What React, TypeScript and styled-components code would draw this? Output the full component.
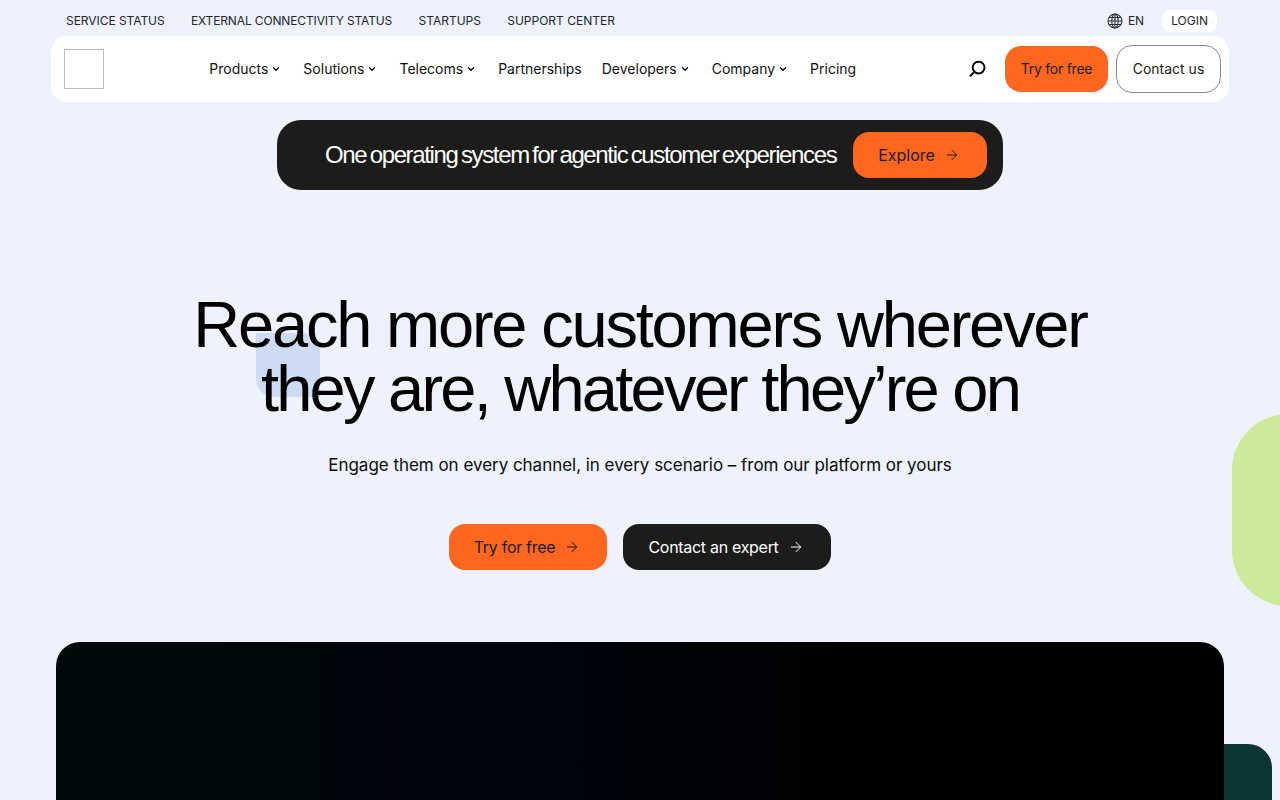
import React from 'react';
import styled, { createGlobalStyle } from 'styled-components';
import { ChevronDown, ArrowRight } from 'lucide-react';

const GlobalStyle = createGlobalStyle`
  html, body {
    margin: 0;
    height: 100%;
    background: #eef2fd;
    overflow: hidden;
  }
  * {
    box-sizing: border-box;
  }
  body {
    font-family: Inter, "Liberation Sans", sans-serif;
    color: #000;
  }
`;

const topLinks = [
  { label: 'Service status', spacing: -0.05 },
  { label: 'External connectivity status', spacing: -0.14 },
  { label: 'Startups', spacing: 0 },
  { label: 'Support center', spacing: 0 },
];

const navItems = [
  { label: 'Products', menu: true },
  { label: 'Solutions', menu: true },
  { label: 'Telecoms', menu: true },
  { label: 'Partnerships', menu: false },
  { label: 'Developers', menu: true },
  { label: 'Company', menu: true },
  { label: 'Pricing', menu: false },
];

const GlobeIcon = () => (
  <svg width="16" height="16" viewBox="0 0 16 16" fill="none" stroke="#2b3038" strokeWidth="1.1">
    <circle cx="8" cy="8" r="7" />
    <ellipse cx="8" cy="8" rx="3.2" ry="7" />
    <path d="M8 1v14M1 8h14M2 4.5h12M2 11.5h12" />
  </svg>
);

const SearchIcon = () => (
  <svg width="18" height="18" viewBox="0 0 18 18" fill="none" stroke="#000">
    <circle cx="10.6" cy="7.6" r="5.9" strokeWidth="1.9" />
    <path d="M5.8 12.4 2 16.4" strokeWidth="2" />
  </svg>
);

function App() {
  return (
    <Page>
      <GlobalStyle />
      <TopBar>
        <TopLinks>
          {topLinks.map((link) => (
            <TopLink key={link.label} $spacing={link.spacing}>
              {link.label}
            </TopLink>
          ))}
        </TopLinks>
        <TopActions>
          <Language>
            <GlobeIcon />
            EN
          </Language>
          <Login>Login</Login>
        </TopActions>
      </TopBar>

      <Nav>
        <LogoBox />
        <NavList>
          {navItems.map((item) => (
            <NavItem key={item.label}>
              {item.label}
              {item.menu && <ChevronDown size={10} strokeWidth={3} />}
            </NavItem>
          ))}
        </NavList>
        <NavActions>
          <SearchButton>
            <SearchIcon />
          </SearchButton>
          <NavButton>Try for free</NavButton>
          <OutlineButton>Contact us</OutlineButton>
        </NavActions>
      </Nav>

      <Banner>
        <BannerText>One operating system for agentic customer experiences</BannerText>
        <BannerButton $dark={false} $width={134}>
          Explore
          <ArrowRight size={16} strokeWidth={1.5} />
        </BannerButton>
      </Banner>

      <Hero>
        <BlueTile />
        <Heading>
          <HeadingLine $spacing={-2.2}>Reach more customers wherever</HeadingLine>
          <HeadingLine $spacing={-2.76}>they are, whatever they’re on</HeadingLine>
        </Heading>
        <Subtitle>Engage them on every channel, in every scenario – from our platform or yours</Subtitle>
        <HeroActions>
          <ActionButton $dark={false} $width={158}>
            Try for free
            <ArrowRight size={16} strokeWidth={1.5} />
          </ActionButton>
          <ActionButton $dark $width={208}>
            Contact an expert
            <ArrowRight size={16} strokeWidth={1.5} />
          </ActionButton>
        </HeroActions>
      </Hero>

      <GreenShape />
      <TealCard />
      <MediaCard />
    </Page>
  );
}

export default App;

const Page = styled.div`
  position: relative;
  width: 1280px;
  height: 800px;
  overflow: hidden;
  display: flex;
  flex-flow: column;
  align-items: center;
`;

const TopBar = styled.div`
  width: 100%;
  height: 36px;
  padding: 6px 63px 0 66px;
  display: flex;
  align-items: center;
  justify-content: space-between;
`;

const TopLinks = styled.div`
  display: flex;
  gap: 26.3px;
`;

const TopLink = styled.a<{ $spacing: number }>`
  font-size: 12px;
  line-height: 16px;
  letter-spacing: ${(p) => p.$spacing}px;
  color: #22262d;
  text-transform: uppercase;
`;

const TopActions = styled.div`
  display: flex;
  align-items: center;
  gap: 18px;
`;

const Language = styled.div`
  display: flex;
  align-items: center;
  gap: 5px;
  font-size: 12px;
  line-height: 16px;
  color: #22262d;
`;

const Login = styled.a`
  height: 22px;
  padding: 0 9px;
  display: flex;
  align-items: center;
  border-radius: 8px;
  background: #fff;
  font-size: 12px;
  line-height: 16px;
  color: #22262d;
  text-transform: uppercase;
`;

const Nav = styled.nav`
  width: 1178px;
  height: 66px;
  padding: 0 8px 0 13px;
  flex-shrink: 0;
  display: flex;
  align-items: center;
  border-radius: 16px;
  background: #fff;
`;

const LogoBox = styled.div`
  width: 40px;
  height: 40px;
  flex-shrink: 0;
  border: 1px solid #bdbdbd;
`;

const NavList = styled.div`
  margin-left: 105.3px;
  display: flex;
  gap: 20px;
`;

const NavItem = styled.a`
  display: flex;
  align-items: center;
  gap: 3px;
  font-size: 14px;
  line-height: 20px;
  color: #111;

  svg {
    margin-right: 2px;
    color: #000;
  }
`;

const NavActions = styled.div`
  margin-left: auto;
  display: flex;
  align-items: center;
  gap: 8px;
`;

const SearchButton = styled.div`
  margin-right: 11px;
  display: flex;
`;

const NavButton = styled.a`
  width: 103px;
  height: 46px;
  display: flex;
  align-items: center;
  justify-content: center;
  border-radius: 16px;
  background: #ff6720;
  font-size: 14px;
  line-height: 20px;
  letter-spacing: -0.25px;
  color: #1c1c1a;
`;

const OutlineButton = styled.a`
  width: 105px;
  height: 48px;
  display: flex;
  align-items: center;
  justify-content: center;
  border: 1px solid #8a8a8a;
  border-radius: 16px;
  font-size: 14px;
  line-height: 20px;
  color: #1c1c1a;
`;

const Banner = styled.div`
  width: 726px;
  height: 70px;
  margin-top: 18px;
  padding: 0 16px 0 48px;
  flex-shrink: 0;
  display: flex;
  align-items: center;
  justify-content: space-between;
  border-radius: 24px;
  background: #1c1c1a;
`;

const BannerText = styled.div`
  font-family: "Liberation Sans", Arial, sans-serif;
  font-size: 24px;
  letter-spacing: -1.35px;
  word-spacing: -2px;
  color: #fff;
  white-space: nowrap;
`;

const ActionButton = styled.a<{ $dark: boolean; $width: number }>`
  width: ${(p) => p.$width}px;
  height: 46px;
  padding-right: 2px;
  flex-shrink: 0;
  display: flex;
  align-items: center;
  justify-content: center;
  gap: 9px;
  border-radius: 16px;
  background: ${(p) => (p.$dark ? '#1c1c1a' : '#ff6720')};
  color: ${(p) => (p.$dark ? '#fff' : '#1c1c1a')};
  font-size: 16px;
  line-height: 24px;
  letter-spacing: -0.3px;
`;

const BannerButton = styled(ActionButton)`
  letter-spacing: 0;
`;

const Hero = styled.section`
  position: relative;
  width: 100%;
  margin-top: 103px;
  display: flex;
  flex-flow: column;
  align-items: center;
`;

const BlueTile = styled.div`
  position: absolute;
  left: 256px;
  top: 40px;
  width: 64px;
  height: 64px;
  border-radius: 0 18px 0 18px;
  background: #cddcf3;
`;

const Heading = styled.h1`
  position: relative;
  margin: 0;
  font-family: "Liberation Sans", Arial, sans-serif;
  font-size: 65px;
  line-height: 64px;
  font-weight: 400;
  text-align: center;
  white-space: nowrap;
  color: #000;
`;

const HeadingLine = styled.span<{ $spacing: number }>`
  display: block;
  letter-spacing: ${(p) => p.$spacing}px;
`;

const Subtitle = styled.p`
  margin: 30px 0 0;
  font-size: 17px;
  line-height: 28px;
  letter-spacing: -0.03px;
  color: #0b0b0b;
`;

const HeroActions = styled.div`
  margin-top: 45px;
  display: flex;
  gap: 16px;
`;

const GreenShape = styled.div`
  position: absolute;
  left: 1232px;
  top: 414px;
  width: 120px;
  height: 192px;
  border-radius: 56px;
  background: #cdea9a;
`;

const TealCard = styled.div`
  position: absolute;
  left: 1100px;
  top: 744px;
  width: 172px;
  height: 120px;
  border-radius: 24px;
  background: #0b3533;
`;

const MediaCard = styled.div`
  position: absolute;
  left: 56px;
  top: 642px;
  width: 1168px;
  height: 300px;
  border-radius: 24px;
  background: linear-gradient(90deg, #000a0c 0%, #00040a 45%, #000 70%);
`;
